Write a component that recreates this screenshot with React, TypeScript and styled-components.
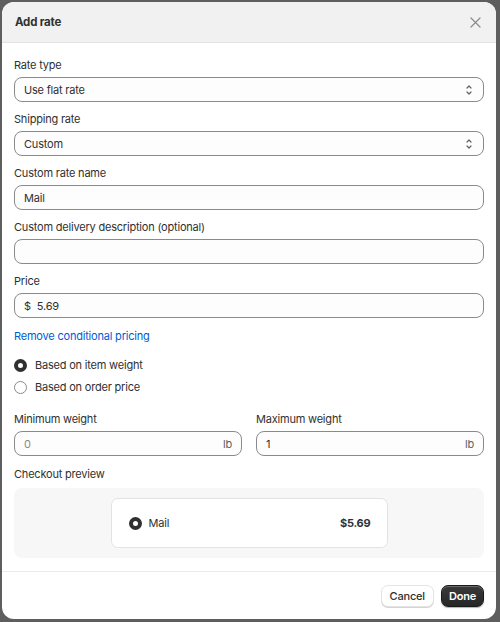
import React from 'react';
import styled, { createGlobalStyle } from 'styled-components';

const GlobalStyle = createGlobalStyle`
  html, body {
    margin: 0;
    padding: 0;
    background: #5e5e5e;
  }
  * {
    box-sizing: border-box;
  }
  body {
    font-family: Inter, "Liberation Sans", sans-serif;
    color: #303030;
    font-size: 11px;
    letter-spacing: -0.2px;
  }
`;

const Backdrop = styled.div`
  width: 500px;
  height: 622px;
  padding: 2px 0 0 2px;
`;

const Modal = styled.div`
  width: 494px;
  height: 617px;
  background: #ffffff;
  border-radius: 12px;
  overflow: hidden;
  display: flex;
  flex-direction: column;
`;

const Header = styled.div`
  height: 41px;
  flex-shrink: 0;
  background: #f1f1f1;
  border-bottom: 1px solid #e3e3e3;
  display: flex;
  align-items: center;
  justify-content: space-between;
  padding: 0 13px 0 13px;
`;

const Title = styled.h2`
  margin: 0;
  font-size: 11.5px;
  font-weight: 650;
  color: #303030;
`;

const CloseButton = styled.button`
  border: none;
  background: none;
  padding: 0;
  width: 16px;
  height: 16px;
  display: flex;
  align-items: center;
  justify-content: center;
  cursor: pointer;
`;

const Body = styled.div`
  padding: 14px 12px 13px;
  display: flex;
  flex-direction: column;
  border-bottom: 1px solid #ebebeb;
`;

const Field = styled.div<{ $gap?: number }>`
  display: flex;
  flex-direction: column;
  gap: ${(p) => p.$gap ?? 4}px;
  margin-bottom: 9px;
  min-width: 0;

  &:last-child {
    margin-bottom: 0;
  }
`;

const Label = styled.label`
  font-size: 11px;
  line-height: 16px;
  color: #303030;
`;

const Box = styled.div<{ $muted?: boolean }>`
  height: 25px;
  border: 1px solid #8a8a8a;
  border-radius: 8px;
  background: #fdfdfd;
  display: flex;
  align-items: center;
  padding: 0 9px 0 9px;
  font-size: 11px;
  color: ${(p) => (p.$muted ? '#8a8a8a' : '#303030')};
  gap: 6px;
`;

const BoxValue = styled.span`
  flex: 1;
`;

const Prefix = styled.span`
  color: #303030;
`;

const Suffix = styled.span`
  color: #616161;
`;

const LinkText = styled.a`
  color: #005bd3;
  font-size: 11px;
  line-height: 16px;
  margin-top: 1px;
  text-decoration: none;
`;

const RadioList = styled.div`
  display: flex;
  flex-direction: column;
  gap: 6px;
  margin-top: 13px;
`;

const RadioRow = styled.div`
  display: flex;
  align-items: center;
  gap: 8px;
  height: 16px;
  font-size: 11px;
`;

const RadioDot = styled.span<{ $checked?: boolean }>`
  width: 13px;
  height: 13px;
  border-radius: 50%;
  flex-shrink: 0;
  border: ${(p) => (p.$checked ? '4px solid #303030' : '1px solid #8a8a8a')};
  background: #fff;
`;

const TwoCol = styled.div`
  display: grid;
  grid-template-columns: 1fr 1fr;
  column-gap: 14px;
  margin-top: 16px;
  margin-bottom: 10px;

  & > div {
    margin-bottom: 0;
  }
`;

const Preview = styled.div`
  background: #f7f7f7;
  border-radius: 8px;
  height: 70px;
  display: flex;
  align-items: center;
  justify-content: center;
`;

const PreviewCard = styled.div`
  width: 277px;
  height: 50px;
  background: #fff;
  border: 1px solid #e3e3e3;
  border-radius: 7px;
  display: flex;
  align-items: center;
  padding: 0 16px 0 17px;
  gap: 7px;
`;

const PreviewName = styled.span`
  flex: 1;
  font-size: 11px;
`;

const PreviewPrice = styled.span`
  font-weight: 700;
  font-size: 11px;
`;

const Footer = styled.div`
  flex: 1;
  display: flex;
  align-items: center;
  justify-content: flex-end;
  gap: 7px;
  padding: 1px 12px 0;
`;

const Button = styled.button<{ $primary?: boolean }>`
  height: 22px;
  padding: 0 ${(p) => (p.$primary ? 7 : 8)}px;
  border-radius: 7px;
  font-family: Inter, "Liberation Sans", sans-serif;
  font-size: 11px;
  letter-spacing: -0.2px;
  font-weight: ${(p) => (p.$primary ? 600 : 500)};
  cursor: pointer;
  color: ${(p) => (p.$primary ? '#ffffff' : '#303030')};
  background: ${(p) => (p.$primary ? 'linear-gradient(#3a3a3a, #262626)' : '#ffffff')};
  border: 1px solid ${(p) => (p.$primary ? '#1a1a1a' : '#e3e3e3')};
  box-shadow: ${(p) =>
    p.$primary
      ? 'inset 0 1px 0 rgba(255,255,255,0.25), 0 1px 1px rgba(0,0,0,0.3)'
      : '0 1px 0 #d4d4d4'};
`;

const Chevrons = () => (
  <svg width="10" height="14" viewBox="0 0 10 14" fill="none" stroke="#616161" strokeWidth="1.2" strokeLinecap="round" strokeLinejoin="round">
    <path d="M3 5 5 3 7 5" />
    <path d="M3 9 5 11 7 9" />
  </svg>
);

const CloseIcon = () => (
  <svg width="11" height="11" viewBox="0 0 11 11" fill="none" stroke="#8a8a8a" strokeWidth="1.2" strokeLinecap="round">
    <path d="M1 1 10 10M10 1 1 10" />
  </svg>
);

const App: React.FC = () => {
  return (
    <>
      <GlobalStyle />
      <Backdrop>
        <Modal>
          <Header>
            <Title>Add rate</Title>
            <CloseButton aria-label="Close">
              <CloseIcon />
            </CloseButton>
          </Header>
          <Body>
            <Field>
              <Label>Rate type</Label>
              <Box>
                <BoxValue>Use flat rate</BoxValue>
                <Chevrons />
              </Box>
            </Field>
            <Field>
              <Label>Shipping rate</Label>
              <Box>
                <BoxValue>Custom</BoxValue>
                <Chevrons />
              </Box>
            </Field>
            <Field>
              <Label>Custom rate name</Label>
              <Box>
                <BoxValue>Mail</BoxValue>
              </Box>
            </Field>
            <Field>
              <Label>Custom delivery description (optional)</Label>
              <Box>
                <BoxValue />
              </Box>
            </Field>
            <Field>
              <Label>Price</Label>
              <Box>
                <Prefix>$</Prefix>
                <BoxValue>5.69</BoxValue>
              </Box>
            </Field>
            <LinkText href="#">Remove conditional pricing</LinkText>
            <RadioList>
              <RadioRow>
                <RadioDot $checked />
                Based on item weight
              </RadioRow>
              <RadioRow>
                <RadioDot />
                Based on order price
              </RadioRow>
            </RadioList>
            <TwoCol>
              <Field>
                <Label>Minimum weight</Label>
                <Box $muted>
                  <BoxValue>0</BoxValue>
                  <Suffix>lb</Suffix>
                </Box>
              </Field>
              <Field>
                <Label>Maximum weight</Label>
                <Box>
                  <BoxValue>1</BoxValue>
                  <Suffix>lb</Suffix>
                </Box>
              </Field>
            </TwoCol>
            <Field $gap={6}>
              <Label>Checkout preview</Label>
              <Preview>
                <PreviewCard>
                  <RadioDot $checked />
                  <PreviewName>Mail</PreviewName>
                  <PreviewPrice>$5.69</PreviewPrice>
                </PreviewCard>
              </Preview>
            </Field>
          </Body>
          <Footer>
            <Button>Cancel</Button>
            <Button $primary>Done</Button>
          </Footer>
        </Modal>
      </Backdrop>
    </>
  );
};

export default App;
